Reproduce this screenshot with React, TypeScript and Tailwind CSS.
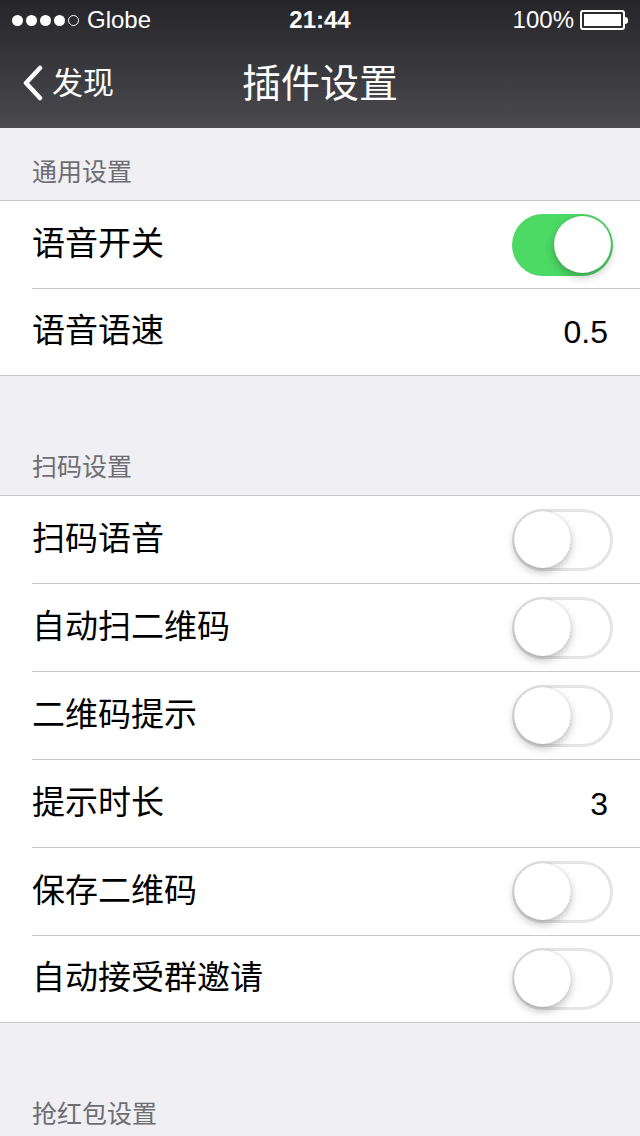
import React from 'react';

const cjk = "font-['Helvetica_Neue','Liberation_Sans','Noto_Sans_CJK_SC',sans-serif]";

function Toggle({ on }: { on: boolean }) {
  return (
    <div
      className={
        'relative h-[62px] w-[101px] rounded-full ' +
        (on ? 'bg-[#4cd964]' : 'border-[3px] border-[#e5e5e5] bg-white')
      }
    >
      <div
        className={
          'absolute h-[57px] w-[57px] rounded-full bg-white shadow-[0_4px_8px_rgba(0,0,0,0.25),0_0_1px_rgba(0,0,0,0.3)] ' +
          (on ? 'right-[2px] top-[2.5px]' : 'left-[-1px] top-[-1px]')
        }
      />
    </div>
  );
}

type Row = { label: string; toggle?: boolean; value?: string };

function Section({ title, rows, gap }: { title: string; rows: Row[]; gap?: boolean }) {
  return (
    <section>
      <div className={'flex items-end px-[32px] pb-[15px] ' + (gap ? 'h-[119px]' : 'h-[72px]')}>
        <span className="text-[25px] leading-none text-[#6d6d72]">{title}</span>
      </div>
      {rows.length > 0 && (
        <div className="border-y border-[#c8c7cc] bg-white">
          {rows.map((r, i) => (
            <div key={r.label} className="pl-[32px]">
              <div
                className={
                  'flex items-center justify-between pr-[27px] ' +
                  (i < rows.length - 1 ? 'h-[88px] border-b border-[#c8c7cc]' : 'h-[86px]')
                }
              >
                <span className="mb-[2px] text-[33px] text-black">{r.label}</span>
                {r.value !== undefined && <span className="pr-[5px] text-[32px] text-black">{r.value}</span>}
                {r.toggle !== undefined && <Toggle on={r.toggle} />}
              </div>
            </div>
          ))}
        </div>
      )}
    </section>
  );
}

export default function App() {
  return (
    <div className={'h-[1136px] w-[640px] overflow-hidden bg-[#efeff4] ' + cjk}>
      <header className="h-[128px] bg-gradient-to-b from-[#26262a] to-[#4b4b4f] text-white">
        <div className="flex h-[40px] items-center justify-between px-[12px] text-[24px]">
          <div className="flex items-center">
            <div className="flex items-center gap-[3px]">
              <span className="h-[11px] w-[11px] rounded-full bg-white" />
              <span className="h-[11px] w-[11px] rounded-full bg-white" />
              <span className="h-[11px] w-[11px] rounded-full bg-white" />
              <span className="h-[11px] w-[11px] rounded-full bg-white" />
              <span className="h-[11px] w-[11px] rounded-full border border-white" />
            </div>
            <span className="ml-[8px]">Globe</span>
          </div>
          <span className="absolute left-1/2 -translate-x-1/2 font-semibold">21:44</span>
          <div className="flex items-center gap-[6px]">
            <span>100%</span>
            <div className="flex items-center">
              <div className="h-[20px] w-[45px] rounded-[3px] border-2 border-white p-[2px]">
                <div className="h-full w-full bg-white" />
              </div>
              <div className="h-[7px] w-[3px] rounded-r-sm bg-white" />
            </div>
          </div>
        </div>
        <div className="relative flex h-[88px] items-center">
          <div className="flex items-center pl-[22px]">
            <svg width="22" height="36" viewBox="0 0 22 36" className="mb-[2px]">
              <path d="M18 3 L4 18 L18 33" fill="none" stroke="white" strokeWidth="4.5" strokeLinecap="round" strokeLinejoin="round" />
            </svg>
            <span className="ml-[8px] text-[31px]">发现</span>
          </div>
          <span className="absolute left-1/2 -translate-x-1/2 text-[39px] font-normal">插件设置</span>
        </div>
      </header>
      <Section
        title="通用设置"
        rows={[
          { label: '语音开关', toggle: true },
          { label: '语音语速', value: '0.5' },
        ]}
      />
      <Section
        gap
        title="扫码设置"
        rows={[
          { label: '扫码语音', toggle: false },
          { label: '自动扫二维码', toggle: false },
          { label: '二维码提示', toggle: false },
          { label: '提示时长', value: '3' },
          { label: '保存二维码', toggle: false },
          { label: '自动接受群邀请', toggle: false },
        ]}
      />
      <Section gap title="抢红包设置" rows={[]} />
    </div>
  );
}
